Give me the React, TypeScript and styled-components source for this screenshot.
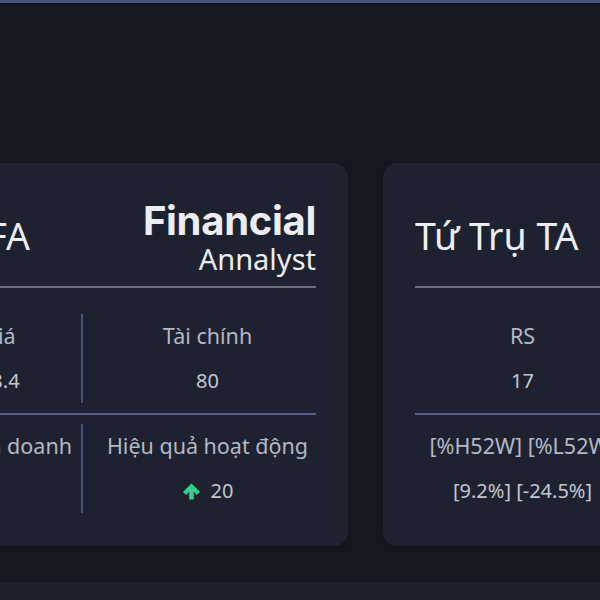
import styled, { createGlobalStyle } from "styled-components"

const GlobalStyle = createGlobalStyle`
	html, body {
		margin: 0;
		padding: 0;
		background: #141821;
		font-family: "Noto Sans", "Liberation Sans", sans-serif;
	}
`

const Page = styled.div`
	width: 600px;
	height: 600px;
	display: flex;
	flex-direction: column;
	overflow: hidden;
	border-top: 3px solid #45557c;
	box-sizing: border-box;
`

const TopShade = styled.div`
	height: 2px;
	background: #0d1528;
	flex: none;
`

const Stage = styled.div`
	flex: 1;
	padding-top: 158px;
	overflow: hidden;
`

const CardRow = styled.div`
	display: flex;
	gap: 35px;
	margin-left: -166px;
`

const Card = styled.div`
	flex: none;
	width: 514px;
	height: 383px;
	box-sizing: border-box;
	padding: 32px;
	background: #1e2230;
	border-radius: 14px;
	box-shadow: 0 2px 10px rgba(0, 0, 0, 0.25);
	display: flex;
	flex-direction: column;
`

const Footer = styled.div`
	height: 18px;
	flex: none;
	background: #1c202d;
`

const Header = styled.div`
	height: 93px;
	box-sizing: border-box;
	padding-bottom: 12px;
	border-bottom: 2px solid #6c7081;
	display: flex;
	align-items: center;
	justify-content: space-between;
`

const Title = styled.div`
	font-size: 37.5px;
	color: #eceef3;
	line-height: 1.2;
	margin-top: 2px;
`

const Brand = styled.div`
	display: flex;
	flex-direction: column;
	align-items: flex-end;
	color: #eceef3;
	margin-top: 4px;
`

const BrandMain = styled.div`
	font-family: Inter, "Noto Sans", sans-serif;
	font-weight: 700;
	font-size: 40px;
	line-height: 44px;
	letter-spacing: -0.3px;
`

const BrandSub = styled.div`
	font-size: 29px;
	line-height: 32px;
`

const Grid = styled.div`
	margin-top: 26px;
	display: flex;
	flex-direction: column;
`

const GridRow = styled.div`
	display: grid;
	grid-template-columns: 1fr 1fr;
	column-gap: 16px;
`

const RowLine = styled.div`
	height: 2px;
	margin: 10px 0 9px;
	background: #575b8b;
`

const Cell = styled.div<{ $divider?: boolean }>`
	height: 89px;
	display: flex;
	flex-direction: column;
	align-items: center;
	justify-content: center;
	gap: 15px;
	border-right: ${(p) => (p.$divider ? "2px solid #4b4f7e" : "none")};
	white-space: nowrap;
`

const Label = styled.div`
	font-size: 21.5px;
	line-height: 30px;
	color: #b4b8c4;
`

const Value = styled.div`
	display: flex;
	align-items: center;
	gap: 10px;
	font-size: 20px;
	line-height: 30px;
	color: #c2c6d0;
`

const UpArrow = () => (
	<svg width="19" height="19" viewBox="0 0 20 20" fill="#2fd08c">
		<path d="M10 1.5 L19 10.5 L15.6 13.6 L12.4 10.3 L12.4 18.5 L7.6 18.5 L7.6 10.3 L4.4 13.6 L1 10.5 Z" />
	</svg>
)

type Metric = { label: string; value: string; up?: boolean }

const fa: Metric[][] = [
	[
		{ label: "Định giá", value: "P/E = 18.4" },
		{ label: "Tài chính", value: "80" },
	],
	[
		{ label: "Kết quả kinh doanh", value: "65" },
		{ label: "Hiệu quả hoạt động", value: "20", up: true },
	],
]

const ta: Metric[][] = [
	[
		{ label: "RS", value: "17" },
		{ label: "Xu hướng", value: "Tăng" },
	],
	[
		{ label: "[%H52W] [%L52W]", value: "[9.2%] [-24.5%]" },
		{ label: "Khối lượng", value: "1.2M" },
	],
]

const MetricGrid = ({ rows }: { rows: Metric[][] }) => (
	<Grid>
		{rows.map((row, i) => (
			<div key={i}>
				{i > 0 && <RowLine />}
				<GridRow>
					{row.map((m, j) => (
						<Cell key={m.label} $divider={j === 0}>
							<Label>{m.label}</Label>
							<Value>
								{m.up && <UpArrow />}
								{m.value}
							</Value>
						</Cell>
					))}
				</GridRow>
			</div>
		))}
	</Grid>
)

export default function App() {
	return (
		<>
			<GlobalStyle />
			<Page>
				<TopShade />
				<Stage>
					<CardRow>
						<Card>
							<Header>
								<Title>Tứ Trụ FA</Title>
								<Brand>
									<BrandMain>Financial</BrandMain>
									<BrandSub>Annalyst</BrandSub>
								</Brand>
							</Header>
							<MetricGrid rows={fa} />
						</Card>
						<Card>
							<Header>
								<Title>Tứ Trụ TA</Title>
							</Header>
							<MetricGrid rows={ta} />
						</Card>
					</CardRow>
				</Stage>
				<Footer />
			</Page>
		</>
	)
}
